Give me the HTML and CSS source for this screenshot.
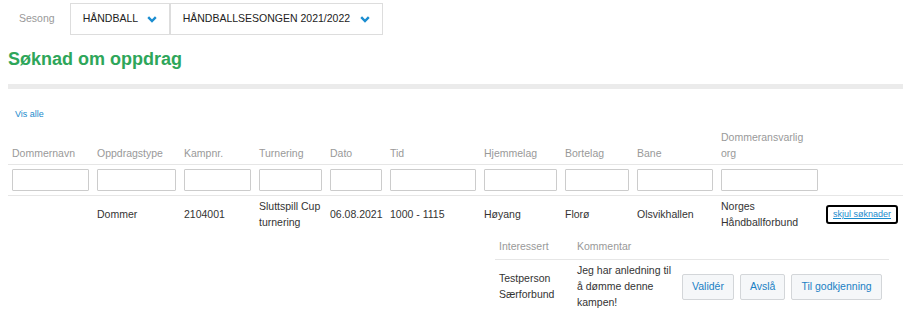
FILE: index.html
```html
<!DOCTYPE html>
<html lang="no">
<head>
    <meta charset="UTF-8">
    <meta name="viewport" content="width=device-width, initial-scale=1.0">
    <title>Søknad om oppdrag</title>
    <link rel="stylesheet" href="styles.css">
</head>
<body>
    <div class="season-bar">
        <span class="season-label">Sesong</span>
        <div class="select select-sport">
            <span>HÅNDBALL</span>
            <svg class="chevron" width="10" height="7" viewBox="0 0 10 7"><path d="M1.2 1.2 L5 5 L8.8 1.2" fill="none" stroke="#1b8dd0" stroke-width="2.4"/></svg>
        </div>
        <div class="select select-season">
            <span>HÅNDBALLSESONGEN 2021/2022</span>
            <svg class="chevron" width="10" height="7" viewBox="0 0 10 7"><path d="M1.2 1.2 L5 5 L8.8 1.2" fill="none" stroke="#1b8dd0" stroke-width="2.4"/></svg>
        </div>
    </div>

    <h1 class="page-title">Søknad om oppdrag</h1>
    <div class="divider"></div>

    <a class="show-all" href="#">Vis alle</a>

    <table class="assignments">
        <colgroup>
            <col class="c-name">
            <col class="c-type">
            <col class="c-match">
            <col class="c-tournament">
            <col class="c-date">
            <col class="c-time">
            <col class="c-home">
            <col class="c-away">
            <col class="c-venue">
            <col class="c-org">
            <col class="c-action">
        </colgroup>
        <thead>
            <tr>
                <th>Dommernavn</th>
                <th>Oppdragstype</th>
                <th>Kampnr.</th>
                <th>Turnering</th>
                <th>Dato</th>
                <th>Tid</th>
                <th>Hjemmelag</th>
                <th>Bortelag</th>
                <th>Bane</th>
                <th>Dommeransvarlig org</th>
                <th></th>
            </tr>
            <tr class="filters">
                <td><input type="text"></td>
                <td><input type="text"></td>
                <td><input type="text"></td>
                <td><input type="text"></td>
                <td><input type="text"></td>
                <td><input type="text"></td>
                <td><input type="text"></td>
                <td><input type="text"></td>
                <td><input type="text"></td>
                <td><input type="text"></td>
                <td></td>
            </tr>
        </thead>
        <tbody>
            <tr class="match-row">
                <td></td>
                <td>Dommer</td>
                <td>2104001</td>
                <td>Sluttspill Cup turnering</td>
                <td>06.08.2021</td>
                <td>1000 - 1115</td>
                <td>Høyang</td>
                <td>Florø</td>
                <td>Olsvikhallen</td>
                <td>Norges Håndballforbund</td>
                <td><a class="toggle" href="#">skjul søknader</a></td>
            </tr>
            <tr class="applications-row">
                <td colspan="6"></td>
                <td colspan="5" class="applications-cell">
                    <table class="applications">
                        <colgroup>
                            <col class="a-person">
                            <col class="a-comment">
                            <col>
                        </colgroup>
                        <thead>
                            <tr>
                                <th>Interessert</th>
                                <th>Kommentar</th>
                                <th></th>
                            </tr>
                        </thead>
                        <tbody>
                            <tr>
                                <td>Testperson Særforbund</td>
                                <td>Jeg har anledning til å dømme denne kampen!</td>
                                <td>
                                    <div class="actions">
                                        <button class="btn">Validér</button>
                                        <button class="btn">Avslå</button>
                                        <button class="btn">Til godkjenning</button>
                                    </div>
                                </td>
                            </tr>
                        </tbody>
                    </table>
                </td>
            </tr>
        </tbody>
    </table>
</body>
</html>
```

FILE: styles.css
```css
html {
    overflow: hidden;
}
body {
    margin: 0 0 0 8px;
    padding-top: 3px;
    font-family: 'Liberation Sans', Arial, sans-serif;
    font-size: 10.5px;
    line-height: 1.5;
    color: #333;
    background: #fff;
}
.season-bar {
    display: flex;
    align-items: center;
}
.season-label {
    color: #999;
    padding: 0 15px 0 11px;
}
.select {
    display: flex;
    align-items: center;
    justify-content: space-between;
    box-sizing: border-box;
    height: 32px;
    padding: 0 12px 0 12px;
    border: 1px solid #ddd;
    background: #fff;
    color: #222;
}
.select-sport {
    width: 100px;
}
.select-season {
    width: 213px;
}
.chevron {
    display: block;
}
.page-title {
    margin: 14px 0 0;
    font-size: 18px;
    line-height: 1.2;
    font-weight: bold;
    color: #2ea65a;
}
.divider {
    height: 5px;
    margin-top: 13px;
    background: #ebebeb;
}
.show-all {
    display: inline-block;
    margin: 19px 0 0 7px;
    font-size: 9px;
    color: #1a8bcd;
    text-decoration: none;
}
.assignments {
    width: 895px;
    margin-top: 3px;
    table-layout: fixed;
    border-collapse: collapse;
}
.c-name { width: 85px; }
.c-type { width: 87px; }
.c-match { width: 75px; }
.c-tournament { width: 71px; }
.c-date { width: 60px; }
.c-time { width: 94px; }
.c-home { width: 81px; }
.c-away { width: 72px; }
.c-venue { width: 84px; }
.c-org { width: 105px; }
.c-action { width: 81px; }
.assignments th {
    padding: 6px 4px 2px;
    font-weight: normal;
    text-align: left;
    vertical-align: bottom;
    color: #999;
    border-bottom: 1px solid #e6e6e6;
}
.filters td {
    padding: 4px;
    border-bottom: 1px solid #e6e6e6;
}
.filters input {
    display: block;
    box-sizing: border-box;
    width: 100%;
    height: 22px;
    margin: 0;
    border: 1px solid #ccc;
    border-radius: 1px;
    background: #fff;
}
.match-row td {
    padding: 3px 4px 5px;
    vertical-align: middle;
}
.toggle {
    display: inline-block;
    padding: 1px 5px;
    border: 2px solid #000;
    border-radius: 3px;
    font-size: 9px;
    color: #1a8bcd;
    text-decoration: underline;
}
.applications-row td {
    padding: 0;
}
.applications-row .applications-cell {
    padding: 0 14px 0 15px;
}
.applications {
    width: 100%;
    table-layout: fixed;
    border-collapse: collapse;
}
.a-person { width: 78px; }
.a-comment { width: 105px; }
.applications th {
    padding: 4px;
    vertical-align: middle;
}
.applications td {
    padding: 3px 4px;
    vertical-align: middle;
}
.actions {
    display: flex;
    gap: 6px;
}
.btn {
    flex: none;
    margin: 0;
    padding: 4px 9px;
    font-family: inherit;
    font-size: 10.5px;
    line-height: 1.5;
    white-space: nowrap;
    color: #1a7fc4;
    background: #f5f7f9;
    border: 1px solid #d3d6d9;
    border-radius: 2px;
}
```
